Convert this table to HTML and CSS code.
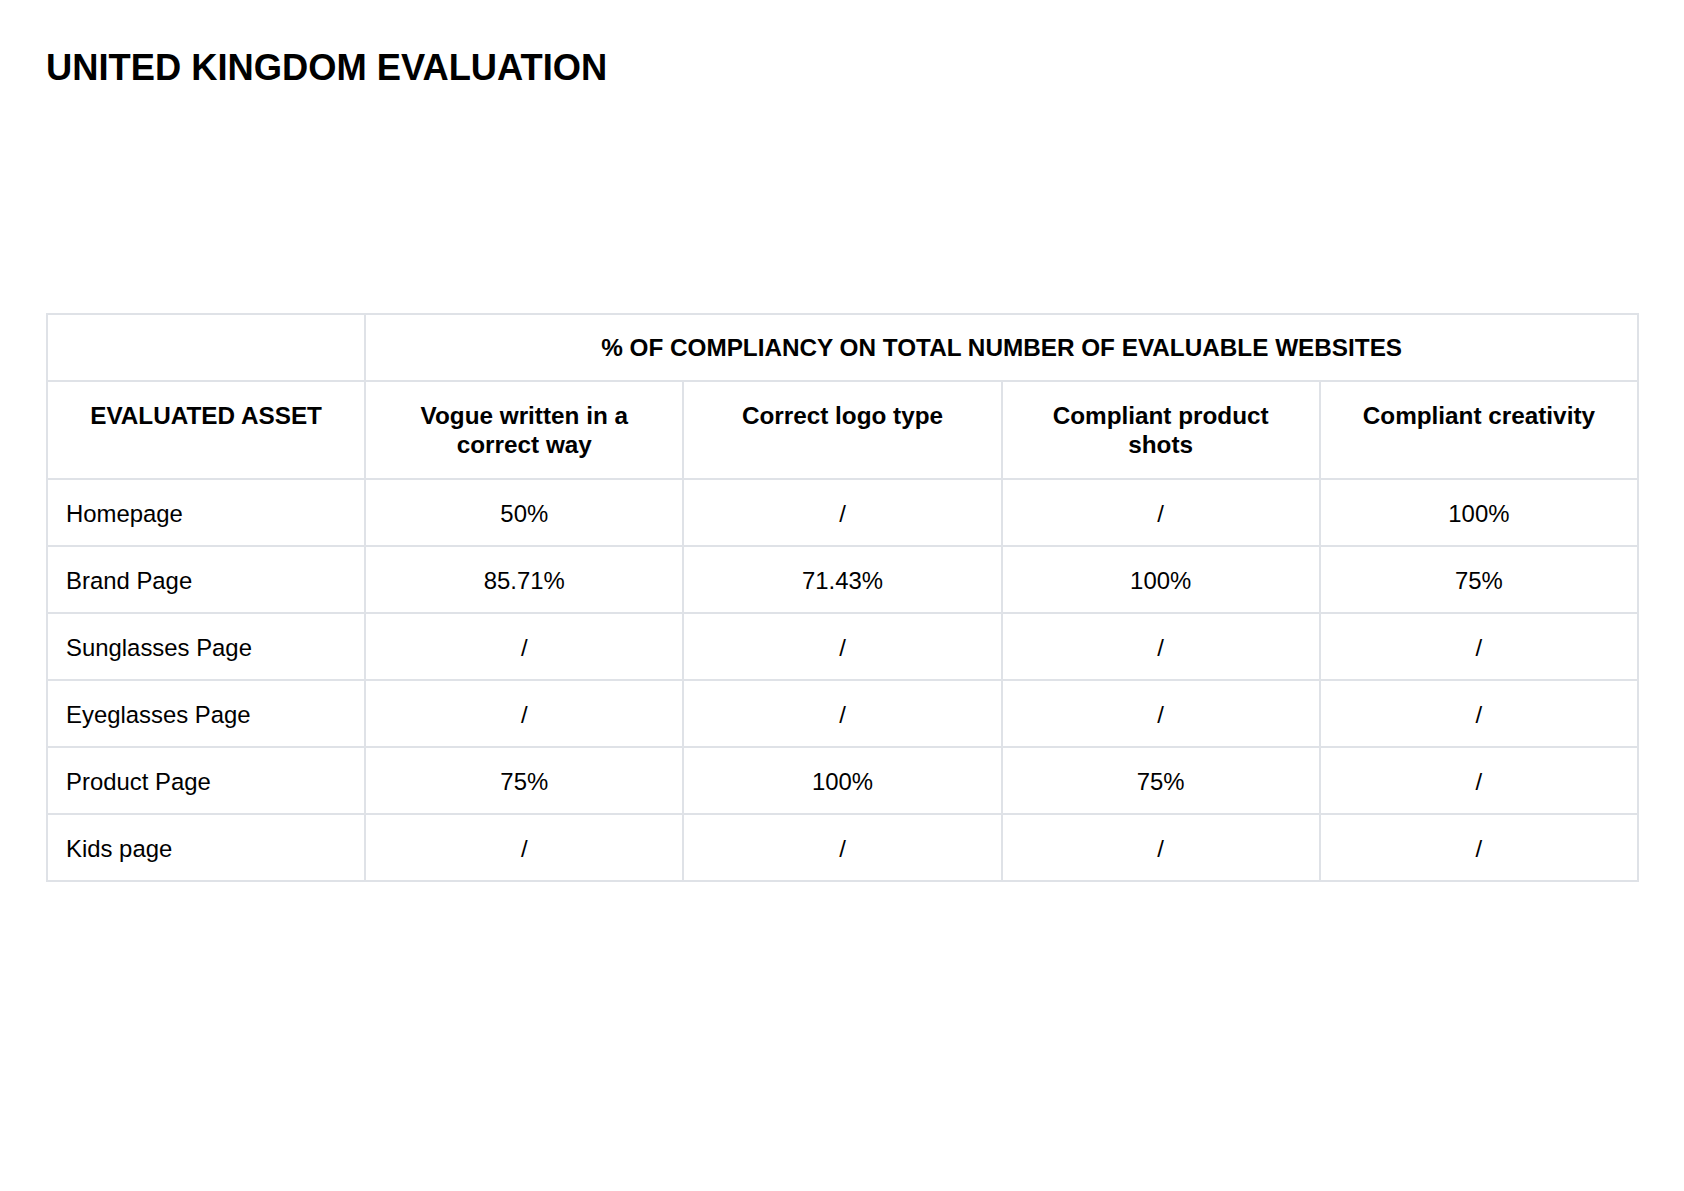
FILE: index.html
```html
<!DOCTYPE html>
<html lang="en">
<head>
<meta charset="utf-8">
<title>United Kingdom Evaluation</title>
<link rel="stylesheet" href="styles.css">
</head>
<body>
<div class="page">
  <h1 class="title">UNITED KINGDOM EVALUATION</h1>
  <table class="eval">
    <colgroup>
      <col class="c"><col class="c"><col class="c"><col class="c"><col class="c">
    </colgroup>
    <thead>
      <tr class="group-row">
        <th></th>
        <th colspan="4">% OF COMPLIANCY ON TOTAL NUMBER OF EVALUABLE WEBSITES</th>
      </tr>
      <tr class="head-row">
        <th>EVALUATED ASSET</th>
        <th>Vogue written in a correct way</th>
        <th>Correct logo type</th>
        <th>Compliant product shots</th>
        <th>Compliant creativity</th>
      </tr>
    </thead>
    <tbody>
      <tr><td class="asset">Homepage</td><td>50%</td><td>/</td><td>/</td><td>100%</td></tr>
      <tr><td class="asset">Brand Page</td><td>85.71%</td><td>71.43%</td><td>100%</td><td>75%</td></tr>
      <tr><td class="asset">Sunglasses Page</td><td>/</td><td>/</td><td>/</td><td>/</td></tr>
      <tr><td class="asset">Eyeglasses Page</td><td>/</td><td>/</td><td>/</td><td>/</td></tr>
      <tr><td class="asset">Product Page</td><td>75%</td><td>100%</td><td>75%</td><td>/</td></tr>
      <tr><td class="asset">Kids page</td><td>/</td><td>/</td><td>/</td><td>/</td></tr>
    </tbody>
  </table>
</div>
</body>
</html>
```

FILE: styles.css
```css
html, body {
  margin: 0;
  padding: 0;
  background: #ffffff;
}

body {
  font-family: "Liberation Sans", Arial, sans-serif;
  color: #000000;
}

.page {
  padding: 47px 45px 0 46px;
}

.title {
  margin: 0;
  font-size: 36.3px;
  line-height: 41px;
  font-weight: 700;
  color: #000000;
}

.eval {
  margin-top: 225px;
  width: 100%;
  table-layout: fixed;
  border-collapse: collapse;
  border: 2px solid #dfe2e7;
}

.eval col.c {
  width: 20%;
}

.eval th,
.eval td {
  border: 2px solid #dfe2e7;
  line-height: 29px;
  text-align: center;
  vertical-align: middle;
  color: #000000;
}

.eval th {
  font-size: 24.3px;
  font-weight: 700;
  padding: 18px 18px;
}

.eval td {
  font-size: 23.9px;
  font-weight: 400;
  padding: 19px 18px 17px;
}

.eval .head-row th {
  vertical-align: top;
  padding: 19px 18px;
}

.eval td.asset {
  text-align: left;
}
```
